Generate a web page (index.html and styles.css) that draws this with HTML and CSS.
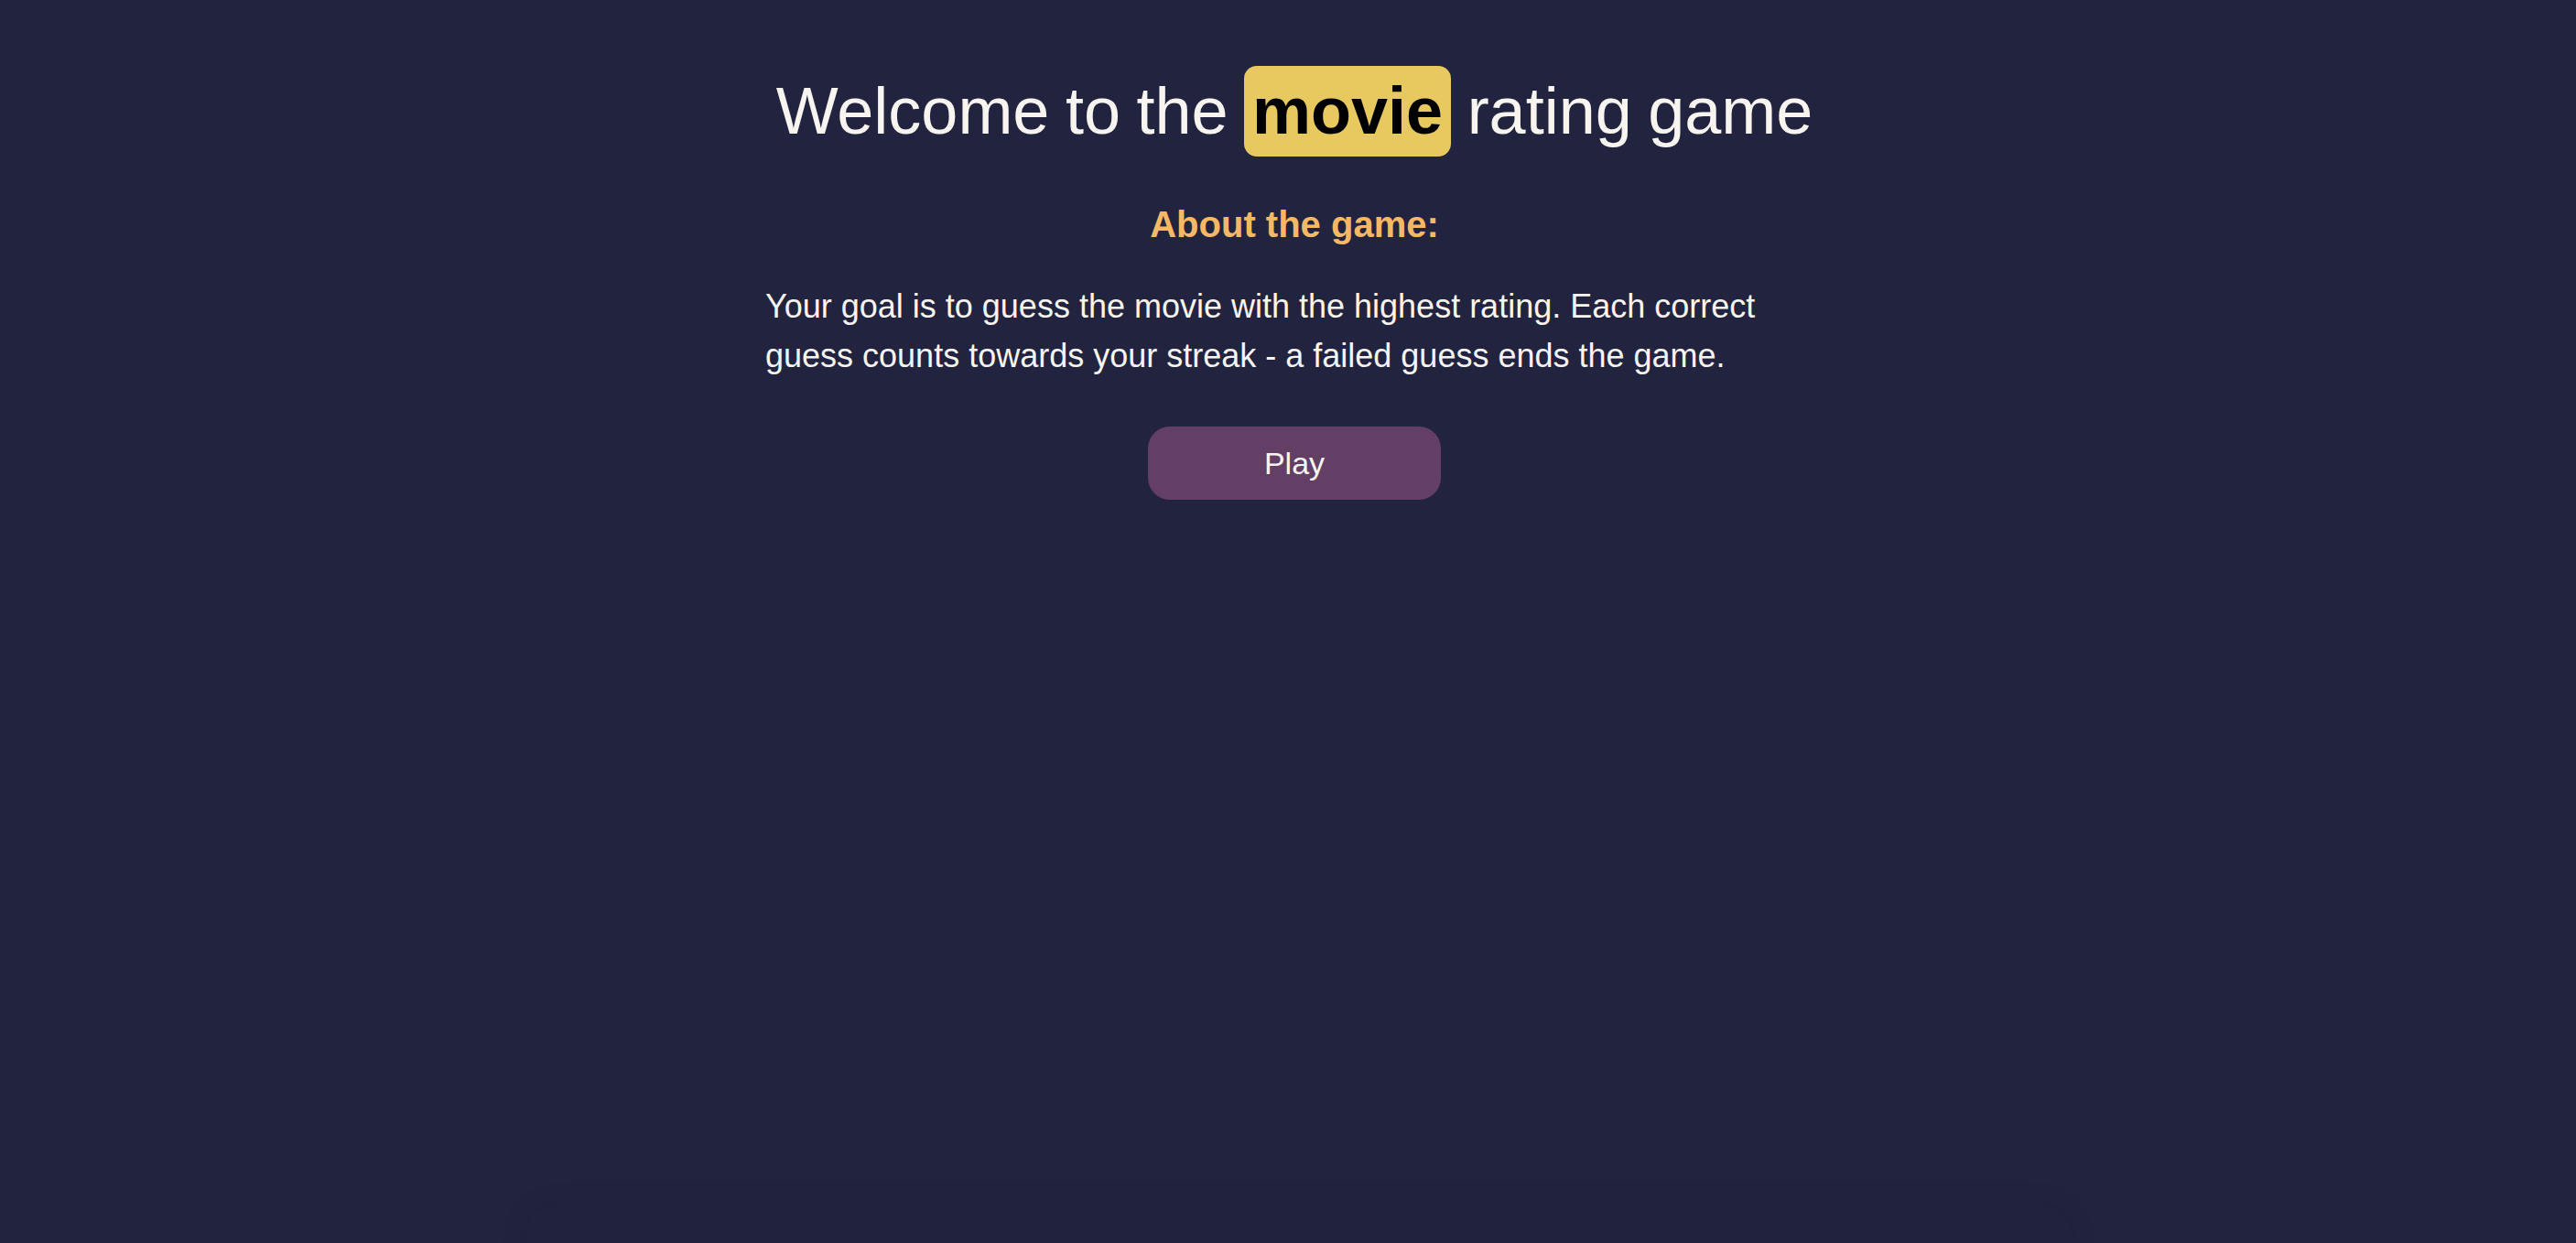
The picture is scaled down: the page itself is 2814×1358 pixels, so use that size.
FILE: index.html
```html
<!DOCTYPE html>
<html lang="en">
<head>
<meta charset="utf-8">
<title>Movie rating game</title>
<link rel="stylesheet" href="styles.css">
</head>
<body>
<main class="page">
  <h1 class="title">Welcome to the <span class="badge">movie</span> rating game</h1>
  <h2 class="subtitle">About the game:</h2>
  <p class="intro">Your goal is to guess the movie with the highest rating. Each correct guess counts towards your streak - a failed guess ends the game.</p>
  <div class="actions">
    <button class="play">Play</button>
  </div>
</main>
<div class="dock-shadow"></div>
</body>
</html>
```

FILE: styles.css
```css
html, body {
  margin: 0;
  padding: 0;
  height: 100%;
}
body {
  background: #22243f;
  color: #f8f4f0;
  font-family: "Liberation Sans", Arial, Helvetica, sans-serif;
  padding-left: 14px;
  box-sizing: border-box;
  overflow: hidden;
  position: relative;
}
.page {
  width: 1156px;
  margin: 0 auto;
  display: flex;
  flex-direction: column;
  align-items: center;
  padding-top: 72px;
}
.title {
  margin: 0;
  font-size: 72px;
  font-weight: 400;
  line-height: 99px;
  white-space: nowrap;
  word-spacing: -2.5px;
}
.badge {
  display: inline-block;
  background: #e7c95f;
  color: #000;
  font-weight: 700;
  line-height: 87px;
  padding: 6px 9px;
  border-radius: 14px;
  vertical-align: top;
  word-spacing: 0;
}
.subtitle {
  margin: 0;
  margin-top: 51px;
  font-size: 40px;
  font-weight: 700;
  color: #f5b865;
  line-height: 46px;
}
.intro {
  margin: 0;
  margin-top: 40px;
  align-self: stretch;
  font-size: 36px;
  line-height: 54px;
}
.actions {
  margin-top: 50px;
}
.play {
  width: 320px;
  height: 80px;
  border: none;
  border-radius: 24px;
  background: #633f66;
  color: #f8f4f0;
  font-family: "Liberation Sans", Arial, Helvetica, sans-serif;
  font-size: 34px;
  cursor: pointer;
}
.dock-shadow {
  position: absolute;
  left: 575px;
  right: 552px;
  bottom: -60px;
  height: 100px;
  border-radius: 30px;
  box-shadow: 0 0 30px rgba(20, 20, 40, 0.12);
  background: rgba(30, 31, 60, 0.25);
}
```
